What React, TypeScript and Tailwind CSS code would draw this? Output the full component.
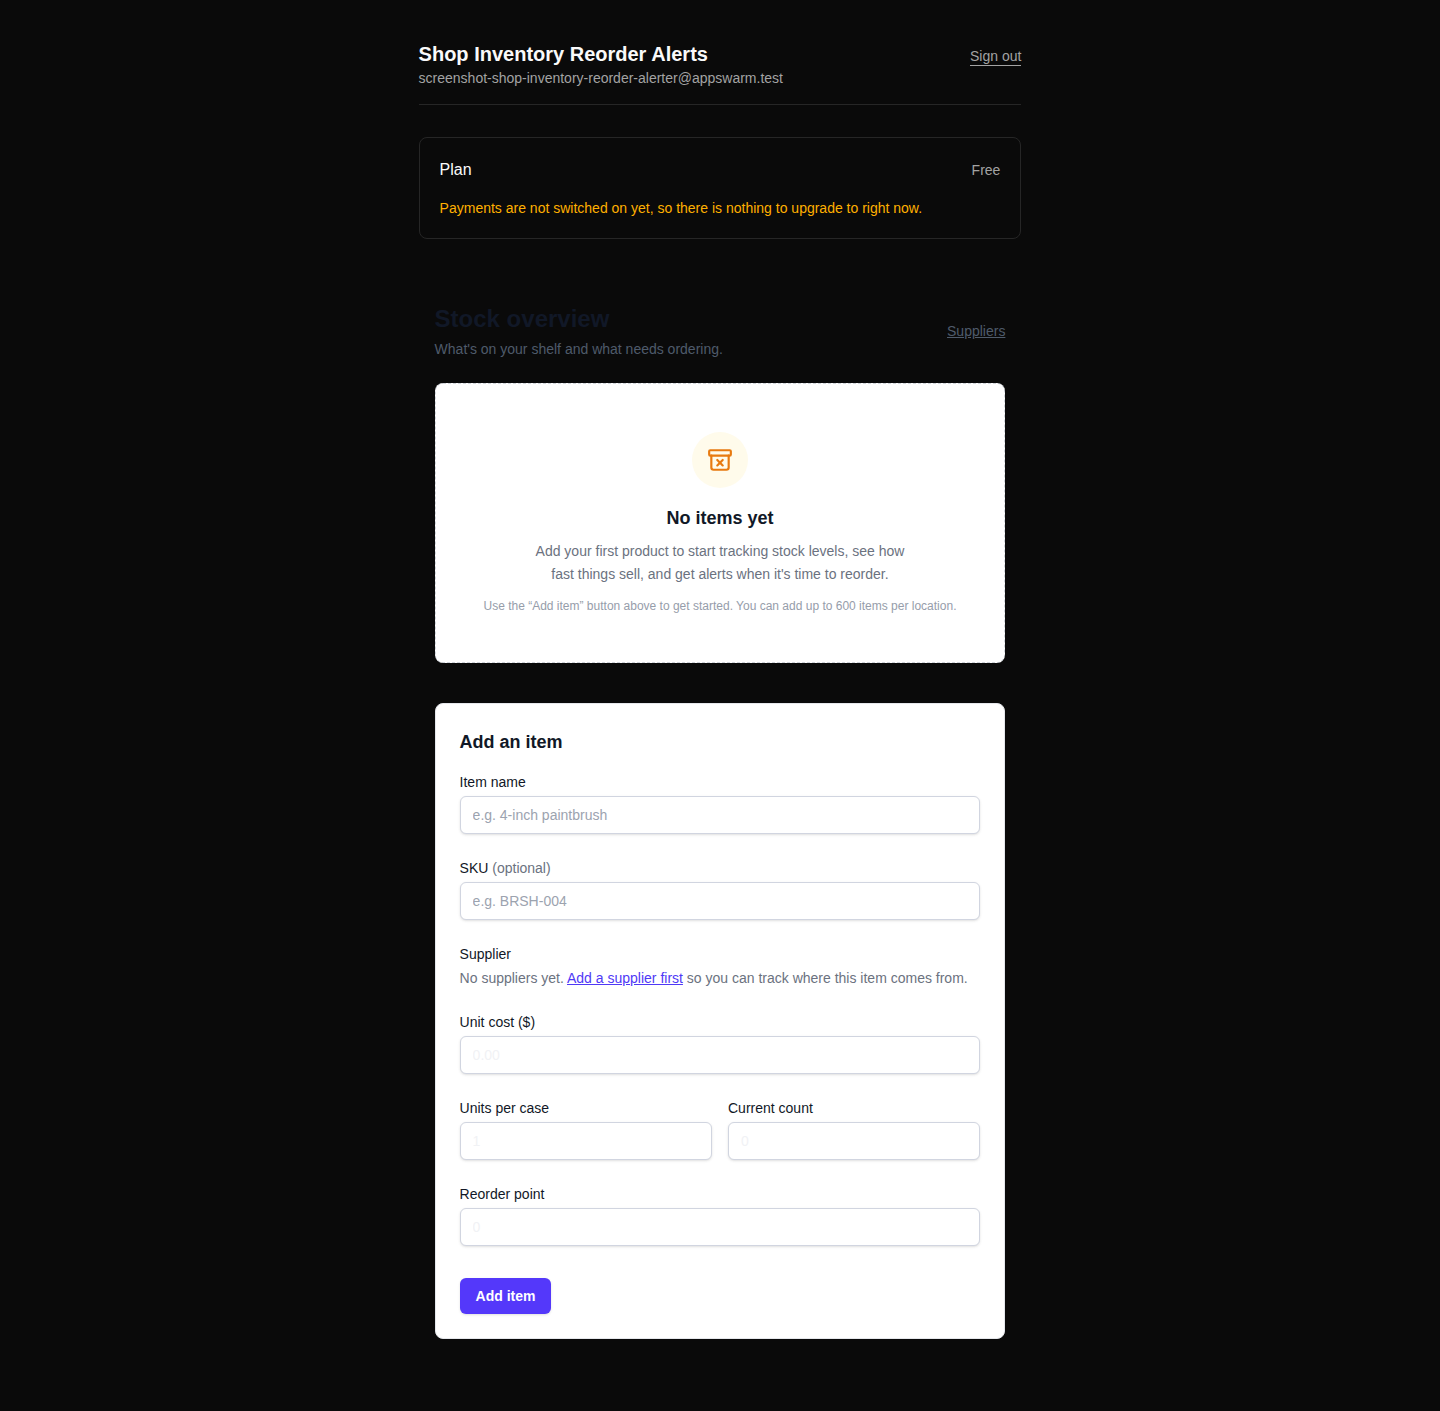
import React from 'react';
import { ArchiveX } from 'lucide-react';

function Field({ label, hint, placeholder, faint }: { label: string; hint?: string; placeholder: string; faint?: boolean }) {
    return (
        <div className="flex-1">
            <label className="block mb-1 text-sm leading-5 text-[#111827]">
                {label}
                {hint && <span className="text-[#6b7280]"> {hint}</span>}
            </label>
            <input
                type="text"
                placeholder={placeholder}
                className={`block w-full h-[38px] px-3 text-sm bg-white border border-[#d1d5e0] rounded-md shadow-sm outline-none ${faint ? 'placeholder:text-[#f1f2f5]' : 'placeholder:text-[#9ca3af]'}`}
            />
        </div>
    );
}

export default function App() {
    return (
        <div className="min-h-screen bg-[#0a0a0a] font-['Liberation_Sans',Arial,sans-serif]">
            <div className="w-[602.8px] mx-auto pt-10 pb-[72px]">
                <header className="flex items-start justify-between pb-4 border-b border-[#262626]">
                    <div>
                        <h1 className="text-xl leading-7 font-bold text-[#fafafa]">Shop Inventory Reorder Alerts</h1>
                        <p className="text-sm leading-5 text-[#a3a3a3]">screenshot-shop-inventory-reorder-alerter@appswarm.test</p>
                    </div>
                    <a className="mt-[7px] text-sm leading-[18px] text-[#a3a3a3] border-b border-[#a3a3a3]">Sign out</a>
                </header>

                <section className="mt-8 p-5 border border-[#262626] rounded-lg">
                    <div className="flex items-center justify-between">
                        <span className="text-base leading-6 text-[#fafafa]">Plan</span>
                        <span className="text-sm text-[#a3a3a3]">Free</span>
                    </div>
                    <p className="mt-4 text-sm leading-5 text-[#ffb000]">Payments are not switched on yet, so there is nothing to upgrade to right now.</p>
                </section>

                <main className="mt-16 px-4">
                    <div className="flex items-center justify-between mb-6">
                        <div>
                            <h2 className="text-2xl leading-8 font-bold text-[#111827]">Stock overview</h2>
                            <p className="mt-1 text-sm leading-5 text-[#4f5b6b]">What's on your shelf and what needs ordering.</p>
                        </div>
                        <a className="text-sm leading-5 text-[#4f5b6b] underline">Suppliers</a>
                    </div>

                    <div className="flex flex-col items-center pt-12 pb-12 bg-white border border-dashed border-[#d1d5db] rounded-lg text-center">
                        <div className="flex items-center justify-center w-14 h-14 rounded-full bg-[#fffbeb]">
                            <ArchiveX className="w-[26px] h-[26px] text-[#e87a10]" />
                        </div>
                        <h3 className="mt-4 text-lg leading-7 font-semibold text-[#111827]">No items yet</h3>
                        <p className="mt-2 max-w-[384px] text-sm leading-[23px] text-[#6b7280]">
                            Add your first product to start tracking stock levels, see how fast things sell, and get alerts when it's time to reorder.
                        </p>
                        <p className="mt-3 text-xs leading-4 text-[#969daa]">Use the “Add item” button above to get started. You can add up to 600 items per location.</p>
                    </div>

                    <form className="mt-10 p-6 bg-white border border-[#e5e7eb] rounded-lg">
                        <h3 className="mb-4 text-lg leading-7 font-semibold text-[#111827]">Add an item</h3>
                        <div className="flex flex-col gap-6">
                            <Field label="Item name" placeholder="e.g. 4-inch paintbrush" />
                            <Field label="SKU" hint="(optional)" placeholder="e.g. BRSH-004" />
                            <div>
                                <label className="block mb-1 text-sm leading-5 text-[#111827]">Supplier</label>
                                <p className="text-sm leading-5 text-[#6b7280]">
                                    No suppliers yet. <a className="text-[#4f39f6] underline">Add a supplier first</a> so you can track where this item comes from.
                                </p>
                            </div>
                            <Field label="Unit cost ($)" placeholder="0.00" faint />
                            <div className="flex gap-4">
                                <Field label="Units per case" placeholder="1" faint />
                                <Field label="Current count" placeholder="0" faint />
                            </div>
                            <Field label="Reorder point" placeholder="0" faint />
                        </div>
                        <button type="button" className="mt-8 h-9 px-4 text-sm font-bold text-white bg-[#5438fa] rounded-md shadow-sm">Add item</button>
                    </form>
                </main>
            </div>
        </div>
    );
}
